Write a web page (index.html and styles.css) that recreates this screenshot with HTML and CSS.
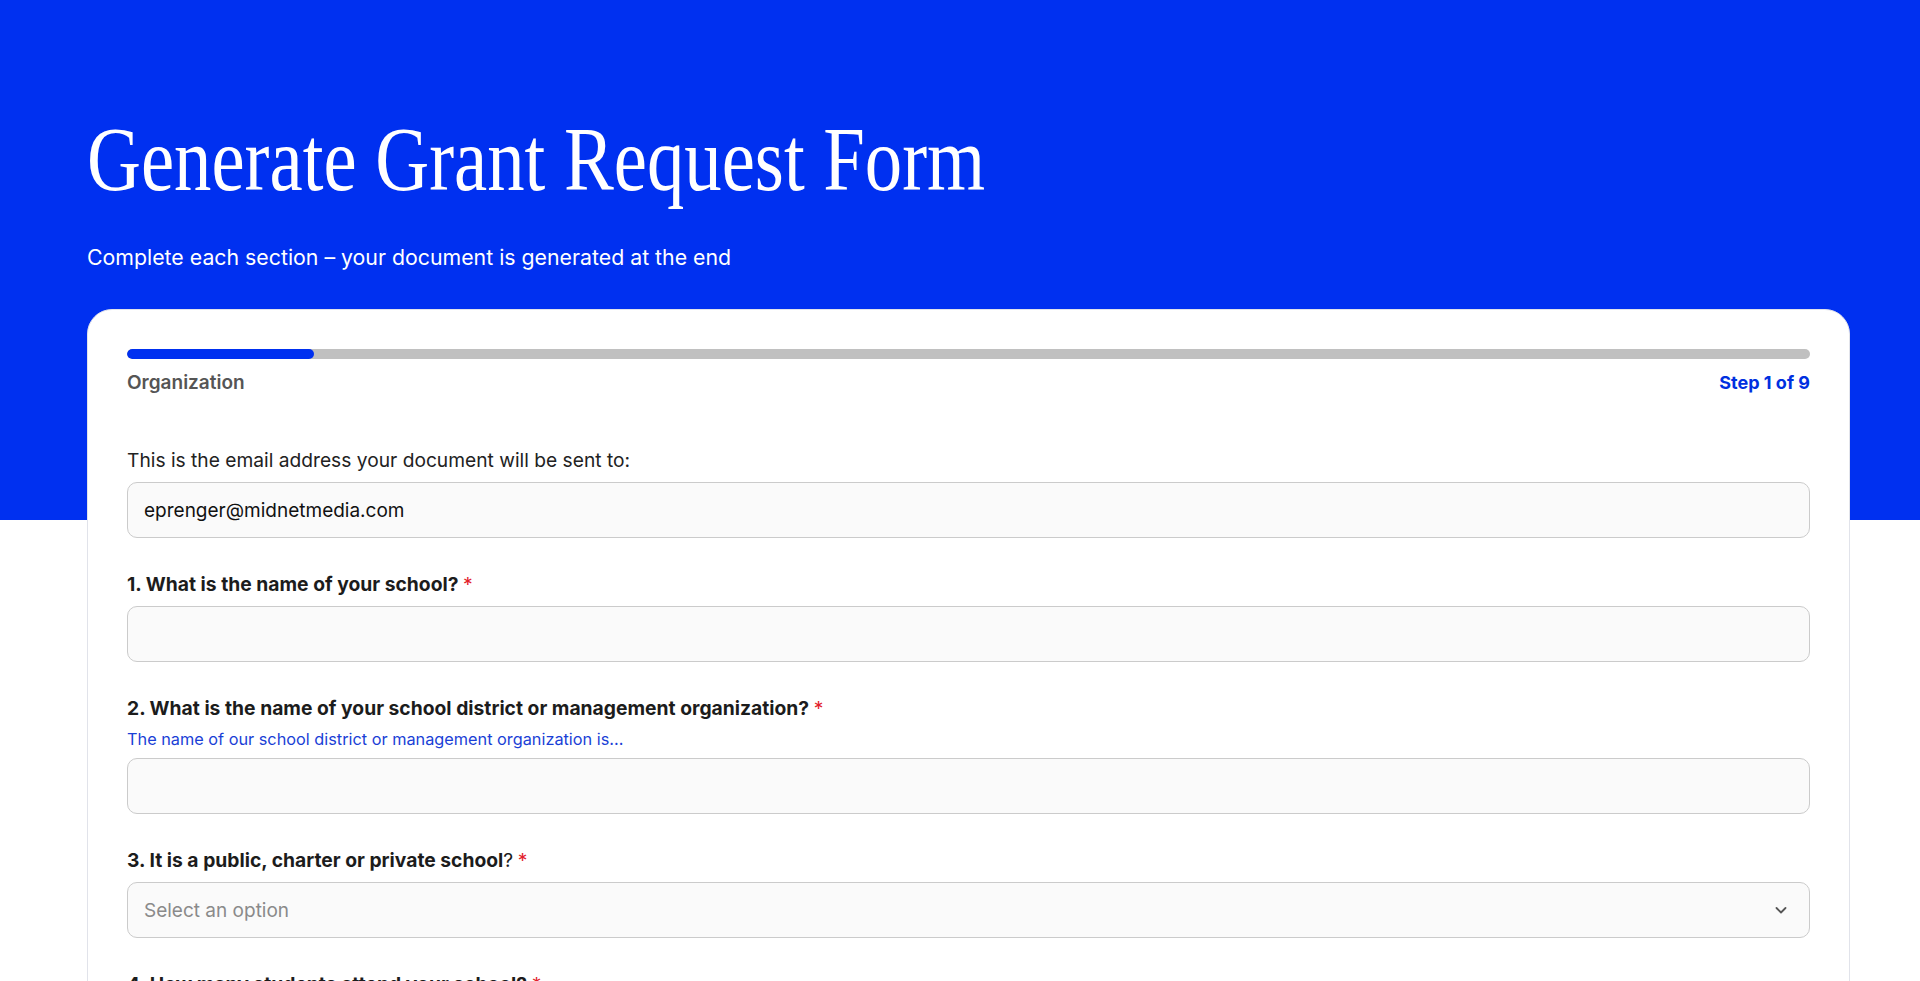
FILE: index.html
```html
<!DOCTYPE html>
<html lang="en">
<head>
  <meta charset="UTF-8" />
  <meta name="viewport" content="width=device-width, initial-scale=1.0"/>
  <title>Generate Grant Request Form</title>
  <link rel="stylesheet" href="styles.css">
</head>
<body>

  <div class="page">
    <h1 class="title">Generate Grant Request Form</h1>
    <p class="subtitle">Complete each section – your document is generated at the end</p>

    <div class="card">
      <div class="progress"><div class="progress-fill"></div></div>
      <div class="progress-row">
        <span class="section-name">Organization</span>
        <span class="step">Step 1 of 9</span>
      </div>

      <div class="field field-email">
        <label class="note">This is the email address your document will be sent to:</label>
        <input class="input" type="text" value="eprenger@midnetmedia.com">
      </div>

      <div class="field">
        <label class="label">1. What is the name of your school? <span class="req">*</span></label>
        <input class="input" type="text">
      </div>

      <div class="field">
        <label class="label">2. What is the name of your school district or management organization? <span class="req">*</span></label>
        <div class="hint">The name of our school district or management organization is...</div>
        <input class="input" type="text">
      </div>

      <div class="field">
        <label class="label">3. It is a public, charter or private school<span class="plain">?</span> <span class="req">*</span></label>
        <div class="select-wrap">
          <select class="input select">
            <option>Select an option</option>
            <option>Public</option>
            <option>Charter</option>
            <option>Private</option>
          </select>
          <svg class="chevron" width="14" height="14" viewBox="0 0 14 14">
            <path d="M2.5 5 L7 9.5 L11.5 5" fill="none" stroke="#555" stroke-width="1.8" stroke-linecap="round" stroke-linejoin="round"/>
          </svg>
        </div>
      </div>

      <div class="field">
        <label class="label">4. How many students attend your school? <span class="req">*</span></label>
        <input class="input" type="text">
      </div>
    </div>
  </div>

</body>
</html>
```

FILE: styles.css
```css
* {
  box-sizing: border-box;
}

body {
  margin: 0;
  padding: 0;
  font-family: Inter, "Noto Sans", sans-serif;
  color: #1a1a1a;
  background: linear-gradient(to bottom, #0030f0 520px, #ffffff 520px);
}

.page {
  padding: 0 70px 60px 87px;
}

.title {
  margin: 0;
  padding-top: 115px;
  font-family: "Liberation Serif", serif;
  font-weight: normal;
  font-size: 90px;
  line-height: 90px;
  color: #fff;
  transform: scaleX(0.83);
  transform-origin: left;
  white-space: nowrap;
}

.subtitle {
  margin: 38px 0 0;
  font-size: 21.3px;
  line-height: 28px;
  color: #fff;
}

.card {
  margin-top: 38px;
  background: #fff;
  border: 1px solid #e1e3ea;
  border-radius: 25px;
  padding: 39px 39px 40px;
}

.progress {
  height: 10px;
  border-radius: 5px;
  background: #c0c0c0;
  overflow: hidden;
}

.progress-fill {
  width: 11.1%;
  height: 100%;
  background: #0030f0;
  border-radius: 5px;
}

.progress-row {
  display: flex;
  justify-content: space-between;
  margin-top: 12px;
  line-height: 24px;
  font-weight: 600;
}

.section-name {
  color: #555;
  font-size: 19px;
}

.step {
  color: #0030e0;
  font-size: 18px;
  font-weight: 700;
}

.field {
  margin-top: 34px;
}

.field-email {
  margin-top: 53px;
}

.note {
  display: block;
  font-size: 19.2px;
  line-height: 24px;
  color: #222;
  margin-bottom: 10px;
}

.label {
  display: block;
  font-size: 19.3px;
  line-height: 24px;
  font-weight: 700;
  color: #1c1c1c;
  margin-bottom: 10px;
}

.label .plain {
  font-weight: 400;
}

.req {
  color: #e2202a;
  font-weight: 400;
}

.hint {
  margin: -2px 0 8px;
  font-size: 16.3px;
  line-height: 22px;
  color: #1a3fd6;
}

.input {
  display: block;
  width: 100%;
  height: 56px;
  padding: 0 16px;
  border: 1px solid #cbcbcb;
  border-radius: 10px;
  background: #fafafa;
  font-family: Inter, "Noto Sans", sans-serif;
  font-size: 19px;
  color: #111;
  outline: none;
}

.select-wrap {
  position: relative;
}

.select {
  appearance: none;
  -webkit-appearance: none;
  color: #8a8a8a;
}

.chevron {
  position: absolute;
  right: 22px;
  top: 21px;
  pointer-events: none;
}
```
